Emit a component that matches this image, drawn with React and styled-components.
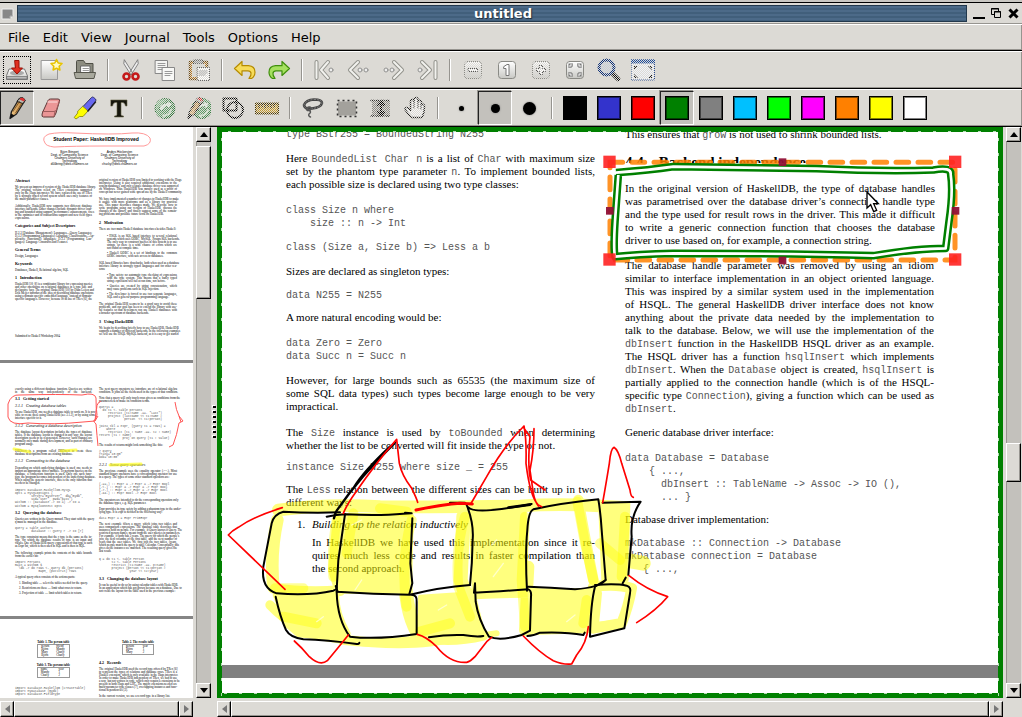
import React from "react";
import styled, { createGlobalStyle, css } from "styled-components";

const c = {
  face: "#dcdad5",
  trough: "#c3c1bc",
  shade: "#96948f",
  green: "#008000",
};

const Global = createGlobalStyle`
  * { box-sizing: border-box; }
  body { margin: 0; background: ${c.face}; font-family: "DejaVu Sans", sans-serif; overflow: hidden; }
  button { font: inherit; color: inherit; border: 0; padding: 0; margin: 0; background: none; }
  p, h2, h3, pre, ul, table { margin: 0; padding: 0; }
  svg { display: block; }
`;

/* ---------- window chrome ---------- */

const Window = styled.main`
  display: flex;
  flex-direction: column;
  height: 100vh;
  background: ${c.face};
  color: #000;
`;
const TitleBar = styled.header`
  display: flex;
  align-items: center;
  gap: 3px;
  height: 24px;
  flex: none;
  padding: 2px 2px 0 0;
  border-top: 2px solid #c9c7c2;
  border-bottom: 1px solid ${c.shade};
  box-shadow: inset 0 1px #000;
`;
const Title = styled.h1`
  flex: 1;
  margin: 0 2px 0 0;
  padding-left: 22px;
  height: 17px;
  border: 1px solid #22384c;
  background: repeating-linear-gradient(#4c6a88 0 2px, #415f7b 2px 4px);
  color: #fff;
  font-size: 13px;
  font-weight: bold;
  line-height: 15px;
  text-align: center;
  text-shadow: 1px 1px 1px #1b2c3d;
`;
const WindowButton = styled.button`
  width: 14px;
  height: 16px;
  display: grid;
  place-items: center;
`;
const Bar = styled.div`
  display: flex;
  align-items: center;
  flex: none;
  gap: ${(p) => p.$gap || 0}px;
  height: ${(p) => p.$h}px;
  padding-left: ${(p) => p.$pad || 0}px;
  border-top: 1px solid #fff;
  border-bottom: 1px solid #000;
  box-shadow: inset -1px -1px ${c.shade};
`;
const MenuItem = styled.button`
  padding: 0 6px;
  height: 22px;
  font-size: 13px;
  line-height: 22px;
`;
const Tool = styled.button`
  width: 34px;
  height: 34px;
  display: grid;
  place-items: center;
  border: 1px solid transparent;
  ${(p) =>
    p.$pressed &&
    css`
      background: ${c.trough};
      border-color: #222 #fff #fff #222;
      box-shadow: -1px -1px ${c.shade};
    `}
  ${(p) =>
    p.$focused &&
    css`
      width: 28px;
      height: 28px;
      margin: 3px;
      border: 1px dotted #000;
    `}
`;
const Separator = styled.span`
  width: 2px;
  height: 22px;
  margin: 0 5px;
  border-left: 1px solid ${c.shade};
  border-right: 1px solid #fff;
`;
const Swatch = styled.span`
  width: 24px;
  height: 24px;
  border: 1px solid #000;
  box-shadow: inset 0 0 0 1px rgba(0, 0, 0, 0.5);
  background: ${(p) => p.$color};
`;
const Dot = styled.span`
  width: ${(p) => p.$size}px;
  height: ${(p) => p.$size}px;
  border-radius: 50%;
  background: #000;
  box-shadow: 0 0 2px #777;
`;

/* ---------- panes and scrollbars ---------- */

const Panes = styled.div`
  flex: 1;
  min-height: 0;
  display: flex;
`;
const Pane = styled.section`
  display: grid;
  grid-template-columns: minmax(0, 1fr) 15px;
  grid-template-rows: minmax(0, 1fr) 16px;
  gap: 3px;
  ${(p) => (p.$side ? "width: 211px; flex: none;" : "flex: 1; min-width: 0; padding-right: 1px;")}
`;
const Handle = styled.div`
  width: 6px;
  flex: none;
  display: flex;
  flex-direction: column;
  align-items: center;
  justify-content: center;
  gap: 3px;
`;
const Grip = styled.i`
  width: 3px;
  height: 2px;
  background: #000;
  box-shadow: -1px -1px #fff;
`;
const Track = styled.div`
  display: flex;
  flex-direction: ${(p) => (p.$v ? "column" : "row")};
  background: ${c.trough};
  box-shadow: inset 1px 1px ${c.shade};
  min-width: 0;
  min-height: 0;
`;
const bevel = css`
  background: ${c.face};
  border: 1px solid;
  border-color: #fff #000 #000 #fff;
  box-shadow: inset -1px -1px ${c.shade};
`;
const Arrow = styled.button`
  ${bevel}
  flex: none;
  display: grid;
  place-items: center;
  ${(p) => (p.$v ? "height: 15px;" : "width: 14px;")}
`;
const Knob = styled.div`
  ${bevel}
  flex: ${(p) => p.$grow} 0 0;
`;
const Space = styled.div`
  flex: ${(p) => p.$grow} 0 0;
`;

function Scrollbar({ v, before, size, after, label }) {
  const color = v ? "#000" : "#777";
  const a = v ? "0,5 4,0 8,5" : "5,0 0,4 5,8";
  const b = v ? "0,0 4,5 8,0" : "0,0 5,4 0,8";
  const w = v ? 8 : 5;
  const h = v ? 5 : 8;
  return (
    <Track $v={v}>
      <Arrow $v={v} aria-label={`${label} back`}>
        <svg width={w} height={h}><polygon points={a} fill={color} /></svg>
      </Arrow>
      <Space $grow={before} />
      <Knob $grow={size} />
      <Space $grow={after} />
      <Arrow $v={v} aria-label={`${label} forward`}>
        <svg width={w} height={h}><polygon points={b} fill={color} /></svg>
      </Arrow>
    </Track>
  );
}

/* ---------- paper ---------- */

const Block = styled.div`
  margin-top: ${(p) => p.$gap || 0}px;
  padding-left: ${(p) => p.$indent || 0}px;
`;
const Line = styled.p`
  white-space: nowrap;
  text-align: justify;
  text-align-last: ${(p) => (p.$natural ? "left" : "justify")};
  ${(p) => p.$center && "text-align-last: center;"}
  ${(p) => p.$italic && "font-style: italic;"}
`;
const Code = styled.pre`
  font-family: "Liberation Mono", monospace;
  font-size: ${(p) => (p.$tiny ? 3 : 10)}px;
  line-height: ${(p) => (p.$tiny ? 3 : 13)}px;
  color: #555;
`;
const InlineCode = styled.code`
  font-family: "Liberation Mono", monospace;
  font-size: 10px;
  line-height: 10px;
  color: #555;
`;
const Heading = styled.h2`
  font-size: ${(p) => (p.$tiny ? 4 : 15)}px;
  line-height: ${(p) => (p.$tiny ? 4 : 17)}px;
  font-weight: ${(p) => (p.$italic ? "normal" : "bold")};
  font-style: ${(p) => (p.$italic ? "italic" : "normal")};
  white-space: pre;
`;
const Column = styled.div`
  min-width: 0;
`;
const Sheet = styled.article`
  position: relative;
  flex: none;
  background: #fff;
  font-family: "Liberation Serif", serif;
  display: grid;
  align-content: start;
  ${(p) =>
    p.$tiny
      ? css`
          height: ${p.$h}px;
          padding: ${p.$top}px 15px 0;
          font-size: 3px;
          line-height: 3px;
          grid-template-columns: 77px 78px;
          column-gap: 7px;
        `
      : css`
          height: ${p.$h}px;
          padding: 0 64px;
          font-size: 11px;
          line-height: 13px;
          grid-template-columns: 309px 309px;
          column-gap: 30px;
        `}
`;

function Rich({ text }) {
  return text.split("`").map((s, i) => (i % 2 ? <InlineCode key={i}>{s}</InlineCode> : s));
}

function Text({ gap, indent, lines, full, tiny, code, h, italic, center }) {
  if (h) return <Block $gap={gap}><Heading $tiny={tiny} $italic={italic}>{h}</Heading></Block>;
  if (code) return <Block $gap={gap} $indent={indent}><Code $tiny={tiny}>{code}</Code></Block>;
  return (
    <Block $gap={gap} $indent={indent}>
      {lines.map((l, i) => (
        <Line key={i} $natural={!full && i === lines.length - 1} $italic={italic} $center={center}>
          <Rich text={l} />
        </Line>
      ))}
    </Block>
  );
}
const Blocks = ({ items, tiny }) => items.map((b, i) => <Text key={i} tiny={tiny} {...b} />);

const leftColumn = [
  { code: "type BStr255 = BoundedString N255" },
  { gap: 11, lines: ["Here `BoundedList Char n` is a list of `Char` with maximum size", "set by the phantom type parameter `n`. To implement bounded lists,", "each possible size is declared using two type classes:"] },
  { gap: 13, code: "class Size n where\n    size :: n -> Int" },
  { gap: 11, code: "class (Size a, Size b) => Less a b" },
  { gap: 11, lines: ["Sizes are declared as singleton types:"] },
  { gap: 11, code: "data N255 = N255" },
  { gap: 9, lines: ["A more natural encoding would be:"] },
  { gap: 13, code: "data Zero = Zero\ndata Succ n = Succ n" },
  { gap: 11, lines: ["However, for large bounds such as 65535 (the maximum size of", "some SQL data types) such types become large enough to be very", "impractical."] },
  { gap: 13, lines: ["The `Size` instance is used by `toBounded` when determining", "whether the list to be converted will fit inside the type or not."] },
  { gap: 9, code: "instance Size N255 where size _ = 255" },
  { gap: 9, lines: ["The `Less` relation between the different sizes can be built up in two", "different ways:"] },
];
const rightTop = [{ lines: ["This ensures that `grow` is not used to shrink bounded lists."] }];
const rightColumn = [
  { gap: 88, lines: [
    "The database handle parameter was removed by using an idiom",
    "similar to interface implementation in an object oriented language.",
    "This was inspired by a similar system used in the implementation",
    "of HSQL. The general HaskellDB driver interface does not know",
    "anything about the private data needed by the implementation to",
    "talk to the database. Below, we will use the implementation of the",
    "`dbInsert` function in the HaskellDB HSQL driver as an example.",
    "The HSQL driver has a function `hsqlInsert` which implements",
    "`dbInsert`.  When the `Database` object is created, `hsqlInsert` is",
    "partially applied to the connection handle (which is of the HSQL-",
    "specific type `Connection`), giving a function which can be used as",
    "`dbInsert`.",
  ] },
  { gap: 11, lines: ["Generic database driver interface:"] },
  { gap: 13, code: "data Database = Database\n    { ...,\n      dbInsert :: TableName -> Assoc -> IO (),\n      ... }" },
  { gap: 9, lines: ["Database driver implementation:"] },
  { gap: 11, code: "mkDatabase :: Connection -> Database\nmkDatabase connection = Database\n   { ...," },
];

const List = styled.ol`
  margin: 9px 0 0;
  padding: 0 0 0 11px;
  list-style: none;
  counter-reset: item;
`;
const Item = styled.li`
  display: grid;
  grid-template-columns: 15px minmax(0, 1fr);
  counter-increment: item;
  &::before { content: counter(item) "."; }
`;

/* ---------- thumbnails ---------- */

const Thumbs = styled.div`
  background: #858585;
  overflow: hidden;
  position: relative;
  display: flex;
  flex-direction: column;
  gap: 3px;
`;
const PaperTitle = styled.h2`
  grid-column: 1 / -1;
  font: bold 5px/6px "Liberation Sans", sans-serif;
  text-align: center;
`;
const Author = styled.p`
  font: 3px/3px "Liberation Sans", sans-serif;
  text-align: center;
  margin: 9px 0 13px;
  padding: 0 ${(p) => p.$right || 0}px 0 ${(p) => p.$left || 0}px;
  white-space: pre-line;
`;
const MiniTable = styled.table`
  margin: 0 auto 6px;
  border-collapse: collapse;
  border: 1px solid #999;
  font-size: 3px;
  line-height: 3px;
  caption { font-weight: bold; white-space: nowrap; }
  th, td { padding: 0 3px; font-weight: normal; text-align: left; }
`;

const p1Left = [
  { h: "Abstract" },
  { gap: 3, lines: ["We present an improved version of the HaskellDB database library.", "The original version relied on TRex extensions supported", "only by the Hugs interpreter. We have replaced the use of TRex", "by a strongly typed record system which uses only features of", "the multi-parameter classes."] },
  { gap: 4, lines: ["Additionally, HaskellDB now supports two different database", "interface backends. Other changes include dynamic driver load-", "ing and bounded string support, performance enhancements, fixes", "to the optimizer and to transactions support and new field types", "expressions."] },
  { gap: 4, h: "Categories and Subject Descriptors" },
  { gap: 4, lines: ["H.2.3 [Database Management]: Languages—Query Languages;", "D.3.2 [Programming Languages]: Language Classifications—Ap-", "plicative (functional) languages; D.3.3 [Programming Lan-", "guages]: Language Constructs and Features"] },
  { gap: 4, h: "General Terms" },
  { gap: 3, lines: ["Design, Languages"] },
  { gap: 4, h: "Keywords" },
  { gap: 3, lines: ["Databases, Haskell, Relational algebra, SQL"] },
  { gap: 4, h: "1   Introduction" },
  { gap: 3, lines: ["HaskellDB [10, 8] is a combinator library for expressing queries", "and other operations on relational databases in a type safe and", "declarative way. The original HaskellDB [10] by Daan Leijen and", "Erik Meijer introduced the idea of describing database operations", "using a domain specific embedded language, instead of domain-", "specific languages. However, because of its use of TRex [6], the"] },
  { gap: 34, lines: ["Submitted to Haskell Workshop 2004"] },
];
const p1Right = [
  { lines: ["original version of HaskellDB was limited to working with the Hugs", "interpreter. Using it also required additional extensions to the", "system databases, and only a single database driver was supported", "on Windows. Thus HaskellDB was mostly used as a proof of", "concept but never gained wide spread use by the Haskell community."] },
  { gap: 4, lines: ["We have implemented a number of changes to HaskellDB to make", "it usable with more platforms and as a library for practical", "use. This paper describes changes made. We describe how to", "write programs using our version of HaskellDB, discuss the", "changes to the library, and finally suggest some of the remain-", "ing problems and possible future work on HaskellDB."] },
  { gap: 5, h: "2   Motivation" },
  { gap: 3, lines: ["There are two main Haskell database interfaces besides Haskell:"] },
  { gap: 4, indent: 8, lines: ["• HSQL is an SQL based interface to several relational", "systems which uses ODBC, MySQL, PostgreSQL backends.", "The only way to construct queries in this system is to use", "strings, so there is a wide chance of errors which are", "not found at compile time."] },
  { gap: 2, indent: 8, lines: ["• Haskell ODBC is a set of bindings to the common", "ODBC interface, with safe access to databases."] },
  { gap: 4, lines: ["SQL based libraries have drawbacks, both when used as a database", "interface library in strongly typed languages and for other rea-", "sons:"] },
  { gap: 3, indent: 8, lines: ["• Type safety: no automatic type checking of expressions", "with the type system. This means that a badly typed", "string expression will fail at run time, not before."] },
  { gap: 2, indent: 8, lines: ["• Queries are created by string concatenation, which", "may cause problems such as SQL injection."] },
  { gap: 2, indent: 8, lines: ["• The developer is forced to use two separate languages,", "SQL and a general-purpose programming language."] },
  { gap: 4, lines: ["The original HaskellDB seems to be a good way to avoid these", "problems, and our goal has been to extend the library with use-", "ful features so that developers can use Haskell databases with", "a broader spectrum of database backends."] },
  { gap: 5, h: "3   Using HaskellDB" },
  { gap: 3, full: true, lines: ["We begin by describing briefly how to use HaskellDB. HaskellDB", "supports a number of different backends. In the following examples", "we will use the HSQL-MySQL backend, as it is easy to get started"] },
];
const p2Left = [
  { full: true, lines: ["exactly using a different database function. Queries are written", "in the same way independently of the backend."] },
  { gap: 3, h: "3.1   Getting started" },
  { gap: 3, italic: true, h: "3.1.1   Creating database tables" },
  { gap: 3, lines: ["To use HaskellDB, one needs a database table to work on. It is pos-", "sible to create these using HaskellDB (see 3.1.2), or by using some", "interface specific to it."] },
  { gap: 4, italic: true, h: "3.1.2   Generating a database description" },
  { gap: 3, lines: ["The database layout description includes the types of database", "tables. If the database layout is changed in any way, the layout", "description needs to be regenerated. However, such changes are", "normally only made during development, and as part of ordinary", "program usage."] },
  { gap: 4, lines: ["DBDirect is a program called DBDirect to create these", "database descriptions from an existing database."] },
  { gap: 3, italic: true, h: "3.1.3   Connecting to the database" },
  { gap: 4, lines: ["Depending on which underlying database is used, one needs to", "import an appropriate driver module. To perform queries on the", "database, a connection function is used. Only one such func-", "tion, the program becomes independent of the underlying database.", "When using the generic interface, this is the only function that", "needs to be changed."] },
  { gap: 4, code: "import Database.HaskellDB.MySQL\nopts = MySQLOptions {\n         server=\"myserver\", db=\"mydb\",\n         uid=\"user\", pwd=\"pass\"}\nwithDB :: (Database -> IO a) -> IO a" },
  { gap: 1, code: "withDB = mysqlConnect opts" },
  { gap: 3, h: "3.2   Querying the database" },
  { gap: 3, lines: ["Queries are written in the Query monad. They start with the query", "q must be managed in the database."] },
  { gap: 3, code: "query = table authors\n         database :: Query r -> IO [r]" },
  { gap: 3, lines: ["The type constraint means that the r type is the same as the in-", "type, for which the database results of type is an input and", "values. One of HaskellDB query expressions of that type is such", "as Expr Int, which is then used in SQL and is then in SQL."] },
  { gap: 4, lines: ["The following example prints the contents of the table bounds", "from the earlier bit:"] },
  { gap: 3, code: "import Persons\nmain = withDB $\n  \\db -> do rows <- query db (persons)\n             mapM_ (putStrLn) rows" },
  { gap: 3, lines: ["A typical query often consists of the actions parts:"] },
  { gap: 3, indent: 4, lines: ["1.  Binding table — select the tables needed for the query."] },
  { gap: 2, indent: 4, lines: ["2.  Restrictions on these — limit what rows to return."] },
  { gap: 2, indent: 4, lines: ["3.  Projection of table — limit which tables to return."] },
];
const p2Right = [
  { full: true, lines: ["The next query operators we introduce are of relational algebra", "condition. It joins all the fields used in the types of that condition."] },
  { gap: 3, lines: ["Note that a query will only touch rows given as conditions from the", "parameterless to make its condition terms."] },
  { gap: 3, code: "query1 =\n  do t1 <- table persons\n     restrict (t1!name .==. \"Last\")\n     project (lastName << t1!name #\n              person  << t1!person)" },
  { gap: 4, code: "join2 tbl = expr, (Query t1 = rows) =\n    where\n     restrict (t1 ! name .==. t2 ! name)\nreturn (t1 ! name)\n             proj on query (t1 ! value)" },
  { gap: 4, lines: ["The results of returns might look something like this:"] },
  { gap: 3, code: "> query\nfrank=\"10:00\"\nbob=\"10:00\"" },
  { gap: 4, italic: true, h: "3.2.1   Some query operators" },
  { gap: 3, lines: ["The previous example uses the equality operator (.==.). Most", "standard binary operators have a corresponding operator for use", "in a query. The types of some other standard operators are:"] },
  { gap: 4, code: "(.==.) :: Expr a -> Expr a -> Expr Bool\n(.<.) :: Expr a -> Expr a -> Expr Bool\n(.>.) :: Expr a -> Expr a -> Expr Bool\n(.&&.) :: Expr Bool -> Expr Bool" },
  { gap: 4, lines: ["The operators are intended to do the corresponding operation only", "the database types, e.g. SQL parameter."] },
  { gap: 3, lines: ["Expr provides its type safety by adding a phantom type to the under-", "lying type. It is expr is defined in the following way:"] },
  { gap: 3, code: "data Expr a = Expr PrimExpr" },
  { gap: 3, lines: ["The next example filters a query, which joins two tables and", "uses comparison expressions. The database table describes that", "instances hold on people. For example, if Query knows if Query. The", "restricted person names, meant from the user queries in parameters.", "For example, if body has 3 years. The query for which the people's", "join, the next columns of the first table, and the next number of", "years that the user tables. We first join the two tables, (years,", "which people match the query is table Calendar. Conceptually, this", "gives us the instances we matched. The resulting query gives the", "last result."] },
  { gap: 5, code: "q = do t1 <- table Person\n       t2 <- table Persons\n       restrict (t1!name .==. p!name)\n       project (person << t1!person #\n                 year << t2!year)" },
  { gap: 4, h: "3.3   Changing the database layout" },
  { gap: 3, lines: ["It can be useful to do so by using calendar tables with HaskellDB.", "In an application which has got grown because on a database. Due to", "not create the layout for the table used in the previous example:"] },
];

function MiniRows({ caption, head, rows }) {
  return (
    <MiniTable>
      <caption>{caption}</caption>
      <thead><tr>{head.map((x) => <th key={x}>{x}</th>)}</tr></thead>
      <tbody>{rows.map((r, i) => <tr key={i}>{r.map((x, j) => <td key={j}>{x}</td>)}</tr>)}</tbody>
    </MiniTable>
  );
}

const Ink = styled.svg`
  position: absolute;
  left: 0;
  top: 0;
  pointer-events: none;
`;

function Thumbnails() {
  return (
    <Thumbs>
      <Sheet $tiny $h={233} $top={9}>
        <PaperTitle>Student Paper: HaskellDB Improved</PaperTitle>
        <Author $left={32}>{"Björn Bringert\nDept. of Computing Science\nChalmers University of\nTechnology\nd00bring@dtek.chalmers.se"}</Author>
        <Author $right={37}>{"Anders Höckersten\nDept. of Computing Science\nChalmers University of\nTechnology\nchucky@dtek.chalmers.se"}</Author>
        <Column><Blocks tiny items={p1Left} /></Column>
        <Column><Blocks tiny items={p1Right} /></Column>
      </Sheet>
      <Sheet $tiny $h={253} $top={25}>
        <Column><Blocks tiny items={p2Left} /></Column>
        <Column><Blocks tiny items={p2Right} /></Column>
      </Sheet>
      <Sheet $tiny $h={120} $top={22}>
        <Column>
          <MiniRows caption="Table 1. The person table" head={["person", "friend"]} rows={[["Björn", "Mandy"], ["Mary", "Charly"], ["Björn", "Charly"]]} />
          <MiniRows caption="Table 3. The persons table" head={["name", "year"]} rows={[["Mandy", "1"], ["Charly", "2"]]} />
          <Text tiny gap={9} code={"import Database.HaskellDB (createTable)\nimport MyDatabase (mydb)\nimport Database.FieldType"} />
        </Column>
        <Column>
          <MiniRows caption="Table 2. The results table" head={["person", "year"]} rows={[["Björn", "1"], ["Mary", "2"]]} />
          <Blocks tiny items={[
            { h: "4.2   Records" },
            { gap: 3, lines: ["The original HaskellDB used the record type offered by TRex [6]", "to represent the types of relations and database rows. TRex is a", "Haskell extension, which is only available in the Hugs interpreter.", "In order to make HaskellDB independent of TRex, we had to use", "a way, but not written in code, which only requires extensions to be", "present in both Hugs and GHC. The major extensions needed are", "multi-parameter type classes [7], overlapping instances and func-", "tional dependencies [3]."] },
            { gap: 3, lines: ["In the current version, we use a record type in a library list."] },
          ]} />
        </Column>
      </Sheet>
      <Ink width="193" height="571" viewBox="0 127 193 571" fill="none">
        <path d="M45 143q-4-6 4-9q10-2 25-1q40 2 58 0q14-1 18 5q2 6-6 8l-40 0q-30 0-50 1q-8-1-9-4" stroke="#f99" />
        <g stroke="#ff0" strokeOpacity=".6" strokeWidth="3" strokeLinecap="round">
          <path d="M14 449l16 3M61 451l15-1M110 465l31-1" />
        </g>
        <g stroke="#f55" strokeWidth="1">
          <path d="M8 404q3-10 12-9q40-1 62 0q13-3 14 3q1 10-1 23l-12 1q-30 3-55 1q-18 3-20-6zM101 401q-6 2-4 14l-2 5q-3 0 1 4q1 12 2 22M95 421l3-5M175 402q1 8 4 14l4 5l-4 2q-2 12-6 22l-4 2M179 416l2 6" />
        </g>
      </Ink>
    </Thumbs>
  );
}

/* ---------- drawing canvas ---------- */

const Frame = styled.div`
  position: relative;
  padding: 5px;
  background-color: ${c.green};
  background-image:
    linear-gradient(90deg, #b4dcb4 3px, transparent 3px),
    linear-gradient(90deg, #b4dcb4 3px, transparent 3px),
    linear-gradient(#b4dcb4 3px, transparent 3px),
    linear-gradient(#b4dcb4 3px, transparent 3px);
  background-size: 15px 1px, 15px 1px, 1px 15px, 1px 15px;
  background-repeat: repeat-x, repeat-x, repeat-y, repeat-y;
  background-position: 11px 4px, 7px calc(100% - 4px), 4px 11px, calc(100% - 4px) 11px;
`;
const Viewport = styled.div`
  position: relative;
  height: 100%;
  overflow: hidden;
  background: #808080;
  display: flex;
  flex-direction: column;
  gap: 13px;
`;
const Scrolled = styled.div`
  margin-top: -4px;
`;
const Selection = styled.div`
  position: absolute;
  left: 378px;
  top: 22px;
  width: 365px;
  height: 116px;
`;
const SelectionBody = styled.div`
  position: absolute;
  inset: 9px 8px 8px 8px;
  padding: 19px 22px 0 17px;
  background: #fff;
  font-family: "Liberation Serif", serif;
  font-size: 11px;
  line-height: 13px;
`;
const Handwriting = styled.svg`
  position: absolute;
  left: 0;
  top: 0;
`;

function Sketch() {
  return (
    <Ink width="776" height="560" viewBox="222 132 776 560" fill="none" strokeLinecap="round" strokeLinejoin="round">
      <g transform="translate(220 420) scale(.333333)">
        <g opacity=".5" stroke="#ff0">
          <path d="M172 300Q150 400 160 500M175 270Q330 250 480 260Q700 262 900 258Q1020 250 1140 258" strokeWidth="38" />
          <path d="M160 505Q250 520 360 512" strokeWidth="32" />
          <path d="M345 285H575L570 515H350L330 450Z" fill="#ff0" strokeWidth="12" />
          <path d="M165 525L350 520Q350 580 385 640L375 660L235 645L200 615Z" fill="#ff0" strokeWidth="14" />
          <path d="M150 555Q230 640 350 655Q520 680 610 655Q700 670 790 648" strokeWidth="28" />
          <path d="M600 530L760 520L790 640L600 645Z" fill="#ff0" strokeWidth="12" />
          <path d="M555 480Q560 590 600 650M730 290L722 480L755 580" strokeWidth="42" />
          <path d="M750 275L915 270L920 510H760Z" fill="#ff0" strokeWidth="10" />
          <path d="M765 520Q850 515 940 515M925 440L915 630" strokeWidth="36" />
          <path d="M930 510L1115 510L1105 635L930 640Z" fill="#ff0" strokeWidth="10" />
          <path d="M1075 240Q1090 330 1120 480M1120 500Q1190 490 1235 505Q1225 560 1205 610L1120 625L1130 520" strokeWidth="32" />
          <path d="M1140 245L1225 250L1220 480L1150 480Z" fill="#ff0" strokeWidth="12" />
          <path d="M1215 420L1270 430" strokeWidth="44" />
          <path d="M365 665Q600 690 700 655Q770 650 830 640M930 635Q1100 620 1210 605" strokeWidth="18" />
        </g>
        <g stroke="#ff0" strokeOpacity=".4" strokeWidth="30">
          <path d="M350 300Q335 380 340 470M400 280L380 400M575 300Q540 420 560 560M735 290Q705 380 715 500L750 590M915 290L905 480L915 620M1072 245L1095 370L1120 480M1215 290L1205 470M1100 540L1090 610" />
          <path d="M165 505L250 505M190 590L290 610M480 265L560 275M600 635L690 610M1140 370L1200 420" />
        </g>
        <path d="M405 510L425 480M395 315L425 300M820 470L850 430M815 375L830 360M1040 605l25-20M290 605l20-15M655 570l25-15" stroke="#fff" strokeOpacity=".6" strokeWidth="4" />
        <g stroke="#000" strokeWidth="6">
          <path d="M360 277Q270 280 190 275Q162 282 155 310L130 440Q122 505 170 520Q270 528 340 512Q356 505 347 498L353 515" />
          <path d="M320 290Q350 284 375 283Q480 288 550 281L575 280M555 278L575 280M690 248L735 248" />
          <path d="M342 295Q345 280 350 272Q420 170 525 68M400 205Q430 155 510 80" strokeWidth="7" />
          <path d="M375 283L355 420L350 510M350 515Q460 522 570 524Q660 502 750 495" />
          <path d="M577 295L571 430L577 490L568 522" />
          <path d="M167 530Q180 590 198 630Q210 652 250 658Q320 660 410 672Q418 672 418 668" />
          <path d="M350 515Q352 600 390 650Q470 660 590 642L590 545Q592 525 575 524" />
          <path d="M627 652Q680 643 730 645Q770 652 790 648" />
          <path d="M740 255Q762 310 758 360Q757 430 750 495M745 262Q765 285 935 252" />
          <path d="M865 263L930 254" strokeWidth="8" />
          <path d="M921 512Q915 400 922 330Q925 275 940 268Q1020 250 1135 238Q1142 280 1145 330L1157 480Q1140 502 1065 508Q990 502 925 500" />
          <path d="M1148 248Q1200 246 1262 245Q1230 290 1235 350L1225 465M1217 473L1208 490" />
          <path d="M765 490L762 518Q830 515 925 508Q935 512 933 530L930 632L905 645Q840 664 807 650Q775 600 767 545L765 490" />
          <path d="M922 648Q940 648 960 638Q1040 635 1090 645L1094 638" />
          <path d="M1125 495Q1190 490 1220 497Q1235 502 1230 520L1213 625L1110 650Q1112 550 1125 500L1157 480" />
        </g>
        <g stroke="#f00" strokeWidth="5">
          <path d="M187 263Q100 290 55 322Q35 333 25 345L195 508" />
          <path d="M223 663Q245 682 268 710Q300 740 322 722Q345 695 385 645" />
          <path d="M592 643Q620 650 650 680Q690 730 740 727Q752 724 765 710L800 665L815 652" />
          <path d="M370 280Q380 255 405 220Q470 125 530 58L538 130Q545 165 575 205Q590 235 593 247" />
          <path d="M588 270Q660 255 720 250L757 252" strokeWidth="9" />
          <path d="M752 252L800 170Q850 80 912 18Q920 60 918 130Q930 230 955 255L965 260M912 25L930 50Q922 140 932 180L975 210M942 26Q942 90 930 150L940 220Q945 245 955 258" />
          <path d="M1148 248Q1160 180 1168 130Q1172 85 1182 82Q1195 90 1205 130L1230 210Q1232 230 1240 232" />
          <path d="M1227 467Q1280 510 1343 530Q1310 570 1250 608" />
          <path d="M910 648Q960 700 1000 722Q1030 735 1055 732L1070 705Q1100 670 1105 620" />
        </g>
      </g>
    </Ink>
  );
}

const bandPath =
  "M48 143Q150 135 220 125Q450 128 650 131Q850 140 1000 135Q1055 125 1052 148Q1060 200 1047 290L1037 370Q950 370 820 392Q560 385 220 385Q110 388 45 395Q40 370 45 290L55 150";

function SelectedParagraph() {
  const corners = [[10, 92], [1047, 92], [10, 385], [1047, 385]];
  const sides = [[536, 100], [536, 395], [18, 246], [1055, 246]];
  return (
    <Selection>
      <SelectionBody>
        <Text lines={[
          "In the original version of HaskellDB, the type of database handles",
          "was parametrised over the database driver’s connection handle type",
          "and the type used for result rows in the driver. This made it difficult",
          "to write a generic connection function that chooses the database",
          "driver to use based on, for example, a connection string.",
        ]} />
      </SelectionBody>
      <Handwriting width="365" height="116" viewBox="0 87 1095 348" fill="none">
        <rect x="30" y="112" width="1035" height="293" stroke="#ff8000" strokeOpacity=".85" strokeWidth="15" strokeDasharray="38 28" strokeLinecap="round" />
        <path d={bandPath} stroke={c.green} strokeWidth="23" strokeLinejoin="round" />
        <path d={bandPath} stroke="#fff" strokeWidth="8" strokeLinejoin="round" />
        {corners.map(([x, y]) => <rect key={x + "-" + y} x={x} y={y} width="37" height="37" fill="#f22" fillOpacity=".9" />)}
        {sides.map(([x, y]) => <rect key={x + "-" + y} x={x} y={y} width="23" height="23" fill="#901038" fillOpacity=".95" />)}
        <path d="M801 201v48l11-10l9 21l9-4l-9-20h14z" fill="#fff" stroke="#000" strokeWidth="4" />
      </Handwriting>
    </Selection>
  );
}

/* ---------- icons ---------- */

const HiddenDefs = styled.svg`
  position: absolute;
`;
const Defs = () => (
  <HiddenDefs width="0" height="0" aria-hidden="true">
    <defs>
      <pattern id="stipple" width="2" height="2" patternUnits="userSpaceOnUse">
        <path d="M0 0h1v1h-1zM1 1h1v1h-1z" fill={c.face} />
      </pattern>
      <linearGradient id="silver" x2="0" y2="1"><stop stopColor="#fff" /><stop offset="1" stopColor="#c8c8c4" /></linearGradient>
      <linearGradient id="pencilWood" x2="1"><stop stopColor="#f2cc8c" /><stop offset="1" stopColor="#b97b32" /></linearGradient>
      <linearGradient id="recycle" x2="1" y2="1"><stop stopColor="#9fd0a4" /><stop offset="1" stopColor="#2d7a3a" /></linearGradient>
    </defs>
  </HiddenDefs>
);

function Icon({ children, off }) {
  return (
    <svg width="24" height="24" viewBox="0 0 24 24" fill="none" strokeLinejoin="round" strokeLinecap="round">
      {children}
      {off && <rect width="24" height="24" fill="url(#stipple)" shapeRendering="crispEdges" />}
    </svg>
  );
}
const chevron = (d, dots) => (
  <>
    <path d={d} stroke="#92928c" strokeWidth="4" />
    <path d={d} stroke="#f2f2ee" strokeWidth="2" />
    {dots.map((x) => <circle key={x} cx={x} cy="12" r="2" fill="#eee" stroke="#929290" />)}
  </>
);
const chip = <rect x="3.5" y="3.5" width="17" height="17" rx="3" fill="url(#silver)" stroke="#8a8a85" />;
const pencil = (
  <>
    <path d="M5 22.500l1.500-7L14 3q3.500-3 6 1.500L11.500 18z" fill="url(#pencilWood)" stroke="#222" strokeWidth="1.300" />
    <path d="M14 3q3.500-3 6 1.500l-2 3.200l-5.700-2.200z" fill="#b9b9b2" stroke="#222" />
    <path d="M15.500 2q3-1 4.300 1.800l-.8 1.700l-4.500-2z" fill="#d33" />
    <path d="M5 22.500l1.200-5l3.300 2z" fill="#111" />
    <path d="M8 15.500L14.500 5.500M10.500 17L17 7" stroke="#6d481c" strokeWidth=".8" />
  </>
);
const disc = (
  <>
    <circle cx="12" cy="12.500" r="10" fill="url(#recycle)" stroke="#2c6f38" />
    <path d="M6 13q1-6 8-6l-1.500-2.500l7 3l-4 6l-1-3q-4 0-5 4z" fill="#e4f2e4" stroke="#2c6f38" strokeWidth=".8" />
    <path d="M18 14q-2 6-8 5.500l1 1.500" stroke="#cfe8d0" strokeWidth="2" />
  </>
);

const icons = {
  Save: <Icon><path d="M4.500 11h15l3 7v3.500h-21V18z" fill="url(#silver)" stroke="#777" /><path d="M2 18.500h20v2.500H2z" fill="#bbb" stroke="#777" strokeWidth=".8" /><ellipse cx="12" cy="15" rx="7" ry="2.500" fill="#aaa" /><path d="M10 2.500h4V10h3.500L12 16L6.500 10H10z" fill="#e03020" stroke="#9c1006" /></Icon>,
  New: <Icon><path d="M2.500 2.500h16v19h-16z" fill="url(#silver)" stroke="#999" /><path d="M17.500 1.500l1.700 3.500l3.800.5l-2.800 2.800l.7 3.700l-3.400-1.800l-3.400 1.800l.7-3.700L12 5.500l3.800-.5z" fill="#fffbc0" stroke="#e8c400" strokeWidth="1.600" /></Icon>,
  Open: <Icon><path d="M3.500 15V3.500q0-1 1-1h6l2 3h7.500v10z" fill="#8c8c80" stroke="#4f4f46" /><path d="M8 8h9v8H8z" fill="#fff" stroke="#666" /><path d="M10 10.500h5.500M10 12.500h5.500" stroke="#999" /><path d="M1.500 14.500h21l-1.500 6H3z" fill="#a9a99d" stroke="#56564c" /></Icon>,
  Cut: <Icon><path d="M5.500 2L14 15.500l-2 1.500L5 6zM18.500 2L10 15.500l2 1.500L19 6z" fill="#eee" stroke="#777" strokeWidth=".9" /><circle cx="7.500" cy="18.500" r="3" stroke="#c41a1a" strokeWidth="2.600" /><circle cx="16.500" cy="18.500" r="3" stroke="#c41a1a" strokeWidth="2.600" /></Icon>,
  Copy: <Icon><path d="M2.500 2.500h12v13h-12z" fill="#f4f4f2" stroke="#888" /><path d="M5 5.500h7M5 7.500h7M5 9.500h7M5 11.500h4" stroke="#999" /><path d="M9.500 9.500h12v13h-12z" fill="#f8f8f6" stroke="#888" /><path d="M12 13.500h7M12 15.500h7M12 17.500h5" stroke="#999" /></Icon>,
  Paste: <Icon off><path d="M2.500 3.500h18v18h-18z" fill="#b87820" stroke="#6e4a14" strokeWidth="1.500" /><path d="M7 2h9v4H7z" fill="#999" stroke="#444" /><path d="M5 6h13v13H5z" fill="#d8d8d4" /><path d="M10.500 9.500h12v13h-12z" fill="#fff" stroke="#666" /><path d="M12 13h8M12 15h8M12 17h6" stroke="#888" /></Icon>,
  Undo: <Icon><path d="M1.500 10.500L9 3.500v4.200h6.500q6.500.5 6.500 6.500q0 4-3.500 6.300h-2.500q2.500-3 2-5.500q-.5-2.200-3-2.200H9v4.700z" fill="#f7dc5a" stroke="#b58b00" strokeWidth="1.200" /></Icon>,
  Redo: <Icon><path d="M22.500 10.500L15 3.500v4.200H8.500Q2 8.200 2 14.200q0 4 3.500 6.300H8q-2.500-3-2-5.500q.5-2.200 3-2.200h6v4.700z" fill="#a5e05f" stroke="#3f8f0c" strokeWidth="1.200" /></Icon>,
  First: <Icon>{chevron("M3.500 4v16M15 4l-7 8l7 8", [18])}</Icon>,
  Previous: <Icon>{chevron("M11 4l-8 8l8 8", [13, 19])}</Icon>,
  Next: <Icon>{chevron("M13 4l8 8l-8 8", [5, 11])}</Icon>,
  Last: <Icon>{chevron("M20.500 4v16M7 4l8 8l-8 8", [5])}</Icon>,
  "Zoom out": <Icon off>{chip}<path d="M7.500 10.500h9v3h-9z" fill="#fff" stroke="#555" /></Icon>,
  "Normal size": <Icon>{chip}<path d="M9 8.500l3-2h2v11h-3v-7H9z" fill="#fff" stroke="#777" /></Icon>,
  "Zoom in": <Icon off>{chip}<path d="M10.500 7.500h3v3h3v3h-3v3h-3v-3h-3v-3h3z" fill="#fff" stroke="#555" /></Icon>,
  "Page width": <Icon>{chip}<path d="M7 10V7h3M14 7h3v3M17 14v3h-3M10 17H7v-3" stroke="#777" strokeWidth="3" strokeLinecap="butt" strokeLinejoin="miter" /><path d="M7 9.500V7h2.500M14.500 7H17v2.500M17 14.500V17h-2.500M9.500 17H7v-2.500" stroke="#fff" strokeLinecap="butt" /></Icon>,
  "Set zoom": <Icon off><path d="M15 15l6 6" stroke="#111" strokeWidth="4.500" /><circle cx="9.500" cy="9.500" r="7.500" fill="#c4ccd8" stroke="#0c2f78" strokeWidth="3" /></Icon>,
  Fullscreen: <Icon off><path d="M.5 2h23v20H.5z" fill="#f0f2f8" stroke="#2a4c90" /><path d="M0 1.500h24v4H0z" fill="#1c4a9c" /><path d="M3 8h4L3 12zM21 8v4l-4-4zM3 20v-4l4 4zM21 20h-4l4-4z" fill="#222" /></Icon>,
  Pencil: <Icon>{pencil}</Icon>,
  Eraser: <Icon><path d="M4 15.500L9 4.500q.8-1.500 2.500-1.500h7.500q2 0 1.500 2L17 17l-2 4H4.500q-2 0-1.500-2.500z" fill="#eb9696" stroke="#5e3838" /><path d="M3.500 15.500h11.500q2-.5 2.500-2L20.500 5" stroke="#a05c5c" /><path d="M15 20.500l1-5" stroke="#a05c5c" /><path d="M9 6h9" stroke="#f7c9c9" strokeWidth="1.500" /></Icon>,
  Highlighter: <Icon><path d="M10 10.500L18.500 1.500q1-1 2.200 0l1.800 1.500q1 1 0 2.300L15 15z" fill="#6868f0" stroke="#28285c" strokeWidth=".9" /><path d="M10 10.500l5 4.500l-5 5.500l-3.500 0l-3.500 2.500l-1.800-1.500l3.500-4.500v-1.500z" fill="#ff0" stroke="#8f8f10" strokeWidth=".9" /><path d="M15 15l7.500-9" stroke="#223" strokeWidth="1.500" /></Icon>,
  Text: <Icon><path d="M4 4h16v6h-1.500q-.5-3.500-3-3.500h-1.500v12q0 1.500 2.500 1.500v1h-9v-1q2.500 0 2.500-1.500v-12H8.500q-2.500 0-3 3.500H4z" fill="#15150c" stroke="#6a6548" strokeWidth=".6" /></Icon>,
  Shapes: <Icon off>{disc}</Icon>,
  "Default pen": <Icon off><g transform="translate(3 0)">{disc}</g><g transform="translate(-4 0)">{pencil}</g></Icon>,
  "Shape recognizer": <Icon off><path d="M2.500 2.500h13v12h-13z" stroke="#000" strokeWidth="2" /><circle cx="14" cy="14" r="8" stroke="#000" strokeWidth="2" /></Icon>,
  Ruler: <Icon off><path d="M.5 7.500h23v10H.5z" fill="#c89a28" stroke="#4d3900" strokeWidth="1.800" /><path d="M4 8v4M7 8v3M10 8v4M13 8v3M16 8v4M19 8v3" stroke="#000" /></Icon>,
  "Select region": <Icon><path d="M7 13q-4-1.500-4-4q2-5 10-5.500q8 0 8 3.500q-1 4.500-10 5.500q-2 0-3.500-.5" stroke="#444" strokeWidth="2.600" /><path d="M7 13q-4-1.500-4-4q2-5 10-5.500q8 0 8 3.500q-1 4.500-10 5.500" stroke="#888" strokeWidth="1" strokeDasharray="1 2" /><path d="M6 12q3-2 4 0q0 3-3.500 2.500q-2-1 0-3M8 14.500q3 1 0 3.500q-1 2 1.500 3" stroke="#555" strokeWidth="1.500" /></Icon>,
  "Select rectangle": <Icon><path d="M3 5.500h18v14H3z" fill="#a3a19c" /><path d="M2.500 4.500h19v16h-19z" stroke="#333" strokeWidth="1.500" strokeDasharray="2 3" strokeLinecap="butt" /></Icon>,
  "Vertical space": <Icon off><path d="M3 4h18v16H3z" fill="#8b8985" /><path d="M2 4.500h20M2 20h20" stroke="#222" strokeWidth="1.500" strokeDasharray="3 2" /><path d="M12 6v13M9 9l3-3.500L15 9M9 16l3 3.500L15 16" stroke="#000" strokeWidth="2.200" /></Icon>,
  Hand: <Icon off><path d="M9 21.500q-4-3-7-8q0-2.500 2.500-2l3 3V5.500q0-2 2-2t1.500 2V3.500q.2-2 2-2t2 2v2q.5-1.500 2-1t1.500 2v2q1-1 2-.2t1 1.700q0 7-2.500 11.500z" fill="#f4f4f4" stroke="#222" strokeWidth="1.500" /><path d="M11 6v6M15 6v6M18 8v5" stroke="#222" /></Icon>,
};

const fileTools = [
  ["Save", "New", "Open"],
  ["Cut", "Copy", "Paste"],
  ["Undo", "Redo"],
  ["First", "Previous", "Next", "Last"],
  ["Zoom out", "Normal size", "Zoom in", "Page width", "Set zoom", "Fullscreen"],
];
const penTools = [
  ["Pencil", "Eraser", "Highlighter", "Text"],
  ["Shapes", "Default pen", "Shape recognizer", "Ruler"],
  ["Select region", "Select rectangle", "Vertical space", "Hand"],
];
const colors = {
  Black: "#000", Blue: "#3333cc", Red: "#f00", Green: "#008000", Gray: "#808080", "Light blue": "#00c0ff",
  "Light green": "#0f0", Magenta: "#f0f", Orange: "#ff8000", Yellow: "#ff0", White: "#fff",
};

const ToolGroups = ({ groups }) =>
  groups.map((names, g) => (
    <React.Fragment key={g}>
      {g > 0 && <Separator />}
      {names.map((n) => (
        <Tool key={n} aria-label={n} $pressed={n === "Pencil"} $focused={n === "Save"}>{icons[n]}</Tool>
      ))}
    </React.Fragment>
  ));

export default function App() {
  return (
    <Window>
      <Global />
      <Defs />
      <TitleBar>
        <WindowButton aria-label="Window menu">
          <svg width="13" height="12"><path d="M1 1h11v7l-3 3H1z" fill="#888" stroke="#eee" /><path d="M9 11V8h3" fill="#ddd" stroke="#aaa" /></svg>
        </WindowButton>
        <Title>untitled</Title>
        <WindowButton aria-label="Minimize"><svg width="12" height="12"><path d="M0 9h12v2H0z" /></svg></WindowButton>
        <WindowButton aria-label="Restore">
          <svg width="11" height="11" fill="none" stroke="#000"><path d="M3.500 6.500h-3v-6h7v3M0 1h8" /><path d="M3.500 3.500h6v6h-6zM3 4h7" fill={c.face} /></svg>
        </WindowButton>
        <WindowButton aria-label="Close"><svg width="11" height="11"><path d="M1.500 1.500l8 8M9.500 1.500l-8 8" stroke="#000" strokeWidth="3" /></svg></WindowButton>
      </TitleBar>
      <Bar as="nav" $h={27} $pad={2} $gap={1}>
        {["File", "Edit", "View", "Journal", "Tools", "Options", "Help"].map((m) => <MenuItem key={m}>{m}</MenuItem>)}
      </Bar>
      <Bar $h={38}><ToolGroups groups={fileTools} /></Bar>
      <Bar $h={38}>
        <ToolGroups groups={penTools} />
        <Separator />
        {[["Fine", 5], ["Medium", 9], ["Thick", 13]].map(([n, s]) => (
          <Tool key={n} aria-label={n} $pressed={n === "Medium"}><Dot $size={s} /></Tool>
        ))}
        <Separator />
        {Object.entries(colors).map(([n, v]) => (
          <Tool key={n} aria-label={n} $pressed={n === "Green"}><Swatch $color={v} /></Tool>
        ))}
      </Bar>
      <Panes>
        <Pane $side>
          <Thumbnails />
          <Scrollbar v label="Thumbnails" before={4} size={152} after={385} />
          <Scrollbar label="Thumbnails sideways" before={0} size={1} after={0} />
        </Pane>
        <Handle>{[0, 1, 2, 3, 4, 5, 6].map((i) => <Grip key={i} />)}</Handle>
        <Pane>
          <Frame>
            <Viewport>
              <Scrolled>
                <Sheet $h={537}>
                  <Column>
                    <Blocks items={leftColumn} />
                    <List>
                      <Item>
                        <Column>
                          <Line $natural $italic>Building up the relation inductively</Line>
                          <Text gap={5} lines={["In HaskellDB we have used this implementation since it re-", "quires much less code and results in faster compilation than", "the second approach."]} />
                        </Column>
                      </Item>
                    </List>
                  </Column>
                  <Column>
                    <Blocks items={rightTop} />
                    <Text gap={13} h="4.4    Backend independence" />
                    <Blocks items={rightColumn} />
                  </Column>
                </Sheet>
              </Scrolled>
              <Sheet $h={600} />
              <Sketch />
              <SelectedParagraph />
            </Viewport>
          </Frame>
          <Scrollbar v label="Page" before={302} size={37} after={202} />
          <Scrollbar label="Page sideways" before={0} size={1} after={0} />
        </Pane>
      </Panes>
    </Window>
  );
}
